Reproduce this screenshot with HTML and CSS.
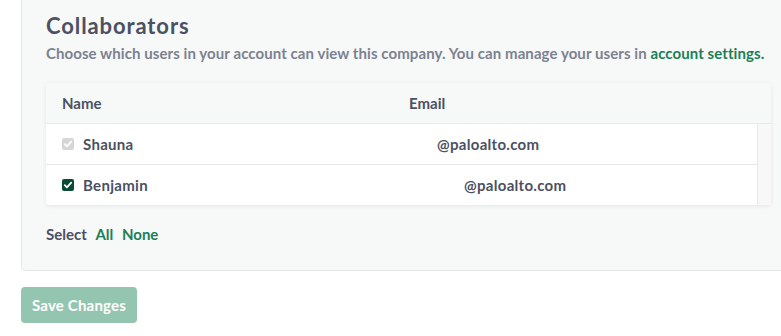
FILE: index.html
```html
<!DOCTYPE html>
<html>
<head>
  <title>Company settings</title>
  <link rel="stylesheet" href="styles.css">
</head>
<body>
  <div class="panel">
    <h2>Collaborators</h2>
    <p class="hint">Choose which users in your account can view this company. You can manage your users in <a href="#">account settings.</a></p>

    <div class="users">
      <div class="users-head">
        <div class="col-name">Name</div>
        <div class="col-email">Email</div>
      </div>
      <div class="users-body">
        <div class="users-rows">
          <div class="user-row">
            <div class="col-name">
              <span class="check check-disabled">
                <svg viewBox="0 0 12 12"><path d="M2.8 6.2l2.1 2.1 4.3-4.6" /></svg>
              </span>
              Shauna
            </div>
            <div class="col-email"><span class="mask mask-short"></span>@paloalto.com</div>
          </div>
          <div class="user-row">
            <div class="col-name">
              <span class="check check-on">
                <svg viewBox="0 0 12 12"><path d="M2.8 6.2l2.1 2.1 4.3-4.6" /></svg>
              </span>
              Benjamin
            </div>
            <div class="col-email"><span class="mask mask-long"></span>@paloalto.com</div>
          </div>
        </div>
        <div class="scroll-track"></div>
      </div>
    </div>

    <div class="select-line">
      Select <a href="#">All</a> <a href="#">None</a>
    </div>
  </div>

  <button class="save-btn" disabled>Save Changes</button>
</body>
</html>
```

FILE: styles.css
```css
body {
  margin: 0;
  font-family: Lato, "Noto Sans", sans-serif;
  background: #fff;
  color: #4b5162;
  overflow: hidden;
}
a {
  color: #1b7f57;
  text-decoration: none;
}
.panel {
  margin: -10px 0 0 21px;
  padding: 21px 0 26px 24px;
  background: #f7f8f8;
  border: 1px solid #e3e6e6;
  border-right: none;
  border-radius: 5px 0 0 5px;
}
.panel h2 {
  margin: 0;
  font-size: 22px;
  line-height: 28px;
  font-weight: 700;
  letter-spacing: 0.9px;
  color: #4b5162;
}
.hint {
  margin: 3px 0 0;
  font-size: 15px;
  line-height: 20px;
  font-weight: 700;
  letter-spacing: 0.08px;
  color: #7c8291;
}
.users {
  width: 725px;
  margin-top: 20px;
  background: #fff;
  border-radius: 4px;
  box-shadow: 0 1px 5px rgba(0, 0, 0, 0.08);
  font-size: 15px;
  line-height: 20px;
  font-weight: 700;
}
.users-head {
  display: flex;
  height: 40px;
  align-items: center;
  background: #f7f8f8;
  border-bottom: 1px solid #e6e8e8;
  border-radius: 4px 4px 0 0;
}
.col-name {
  width: 347px;
  padding-left: 16px;
  display: flex;
  align-items: center;
}
.users-body {
  display: flex;
}
.users-rows {
  flex: 1;
}
.user-row {
  display: flex;
  height: 40px;
  align-items: center;
}
.user-row + .user-row {
  border-top: 1px solid #e6e8e8;
}
.user-row .col-name,
.user-row .col-email {
  letter-spacing: 0.3px;
}
.scroll-track {
  width: 13px;
  background: #f8f8f8;
  border-left: 1px solid #e8e8e8;
}
.check {
  width: 12px;
  height: 12px;
  border-radius: 2px;
  margin-right: 9px;
  display: inline-flex;
}
.check svg {
  width: 12px;
  height: 12px;
  fill: none;
  stroke: #fff;
  stroke-width: 1.8;
  stroke-linecap: round;
  stroke-linejoin: round;
}
.check-disabled {
  background: #d6d6d6;
}
.check-on {
  background: #0c4a36;
}
.mask {
  display: inline-block;
}
.mask-short {
  width: 28px;
}
.mask-long {
  width: 55px;
}
.select-line {
  margin-top: 19px;
  font-size: 15px;
  line-height: 20px;
  font-weight: 700;
}
.select-line a {
  margin-left: 5px;
}
.save-btn {
  margin: 16px 0 0 21px;
  width: 116px;
  height: 36px;
  border: none;
  border-radius: 4px;
  background: #93c5b0;
  color: #fff;
  font-family: inherit;
  font-size: 15px;
  font-weight: 700;
  letter-spacing: 0.2px;
}
```
